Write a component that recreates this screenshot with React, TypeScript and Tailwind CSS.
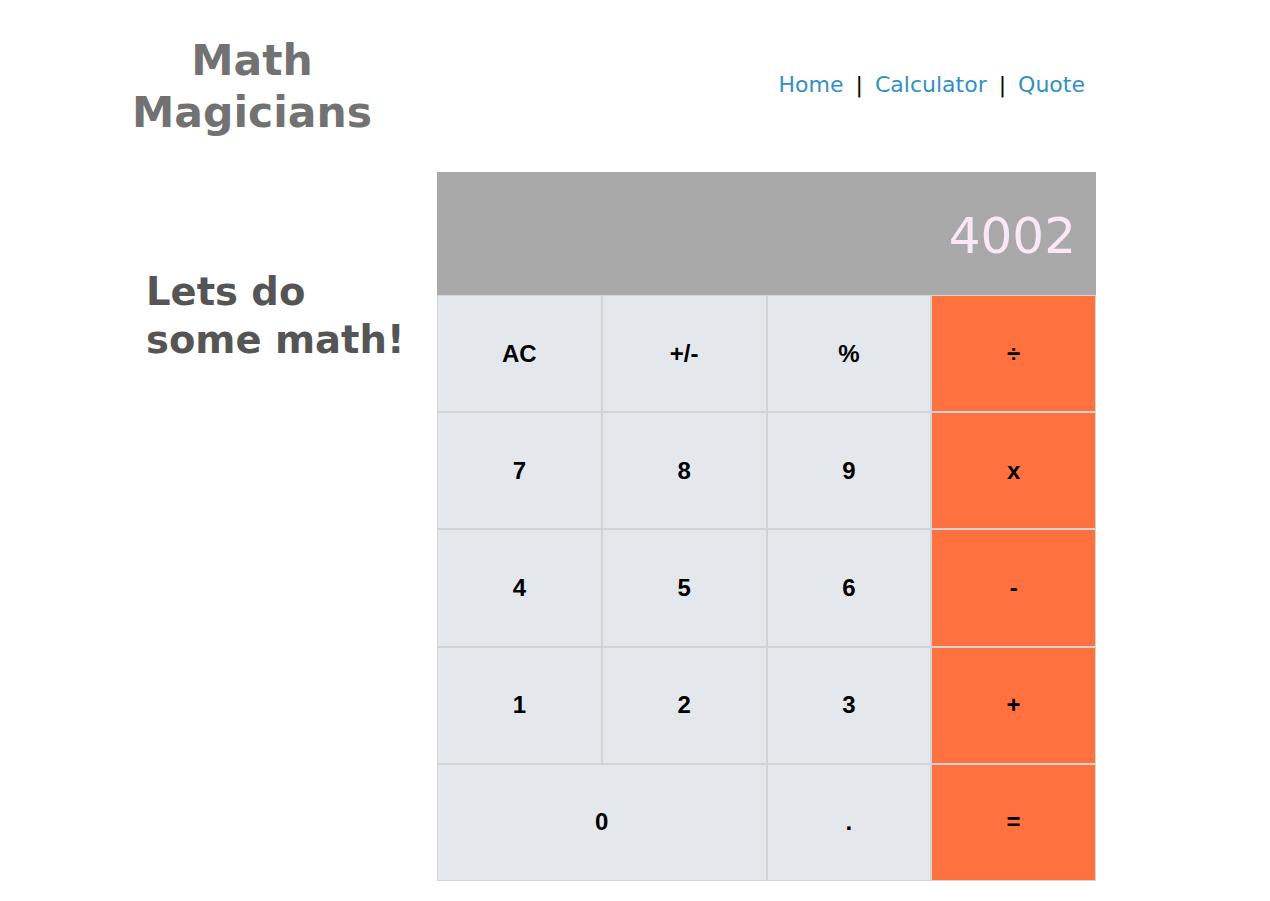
// Math Magicians — calculator page

const KEYS: { label: string; op?: boolean; wide?: boolean }[] = [
  { label: 'AC' }, { label: '+/-' }, { label: '%' }, { label: '÷', op: true },
  { label: '7' }, { label: '8' }, { label: '9' }, { label: 'x', op: true },
  { label: '4' }, { label: '5' }, { label: '6' }, { label: '-', op: true },
  { label: '1' }, { label: '2' }, { label: '3' }, { label: '+', op: true },
  { label: '0', wide: true }, { label: '.' }, { label: '=', op: true },
];

const verdana = { fontFamily: '"DejaVu Sans", Verdana, sans-serif' };

export default function App() {
  return (
    <div className="min-h-screen w-full bg-white" style={verdana}>
      {/* Header */}
      <header className="flex items-start justify-between pt-[35px] pl-[127px] pr-[185px]">
        <h1 className="w-[250px] text-center text-[42.5px] leading-[52px] font-bold text-[#727272]">
          Math Magicians
        </h1>
        <nav className="mt-[33px] flex items-center text-[22px] text-[#3391bf]">
          <a href="#">Home</a>
          <span className="mx-[12px] text-black">|</span>
          <a href="#">Calculator</a>
          <span className="mx-[12px] text-black">|</span>
          <a href="#">Quote</a>
        </nav>
      </header>

      {/* Main */}
      <main className="mt-[33px] flex pl-[146px]">
        <h2 className="mt-[96px] mr-[29px] w-[262px] text-[38.5px] leading-[48px] font-bold text-[#555555]">
          Lets do some math!
        </h2>

        <div className="w-[659px]">
          <div className="flex h-[123px] items-center justify-end bg-[#a9a9a9] pt-[5px] pr-[20px] text-[50px] text-[#fbe8f7]">
            4002
          </div>
          <div className="grid grid-cols-4">
            {KEYS.map(k => (
              <button
                key={k.label}
                className={`h-[117.2px] border border-[#d3d3d3] text-[24px] font-bold text-black ${
                  k.op ? 'bg-[#ff7240]' : 'bg-[#e4e8ec]'
                } ${k.wide ? 'col-span-2' : ''}`}
                style={{ fontFamily: '"Liberation Sans", Arial, sans-serif' }}
              >
                {k.label}
              </button>
            ))}
          </div>
        </div>
      </main>
    </div>
  );
}
